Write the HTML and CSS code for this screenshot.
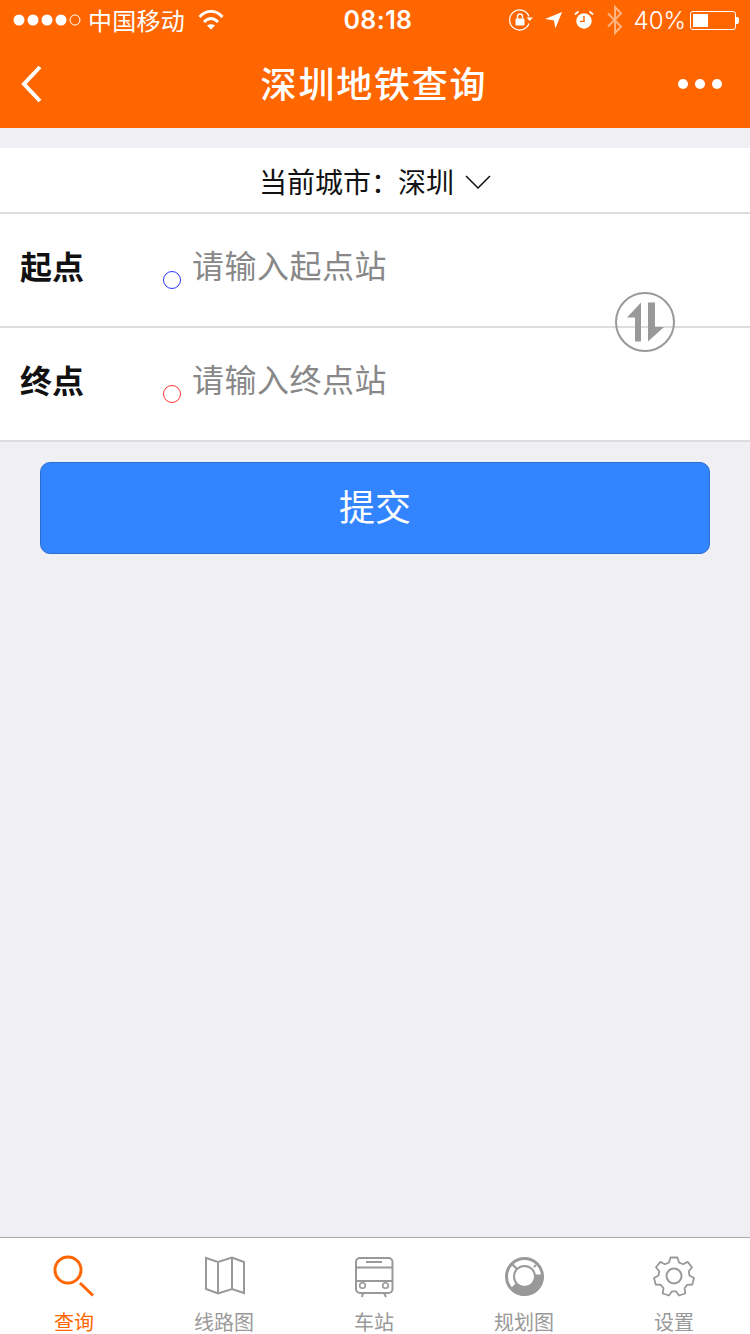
FILE: index.html
```html
<!DOCTYPE html>
<html lang="zh">
<head>
<meta charset="utf-8">
<title>深圳地铁查询</title>
<link rel="stylesheet" href="styles.css">
</head>
<body>
<div class="app">
  <header class="header">
    <div class="status">
      <div class="status-side">
        <svg class="signal" width="68" height="14" viewBox="0 0 68 14"><g fill="#fff"><circle cx="6" cy="7" r="5.500"/><circle cx="20" cy="7" r="5.500"/><circle cx="34" cy="7" r="5.500"/><circle cx="48" cy="7" r="5.500"/></g><circle cx="62" cy="7" r="5" fill="none" stroke="#fff" stroke-width="1"/></svg>
        <span class="carrier">中国移动</span>
        <svg class="wifi" width="26" height="20" viewBox="0 0 26 20"><g fill="none" stroke="#fff" stroke-width="2.800"><path d="M1.500 7C8 -0.500 18 -0.500 24.500 7"/><path d="M6 12C10.500 7.500 15.500 7.500 20 12"/></g><path d="M9 15.500C11.500 13.800 14.500 13.800 17 15.500L13 19.500Z" fill="#fff"/></svg>
      </div>
      <span class="time">08:18</span>
      <div class="status-side status-right">
        <svg width="24" height="22" viewBox="0 0 24 22"><path d="M20 14.500A10 10 0 1 1 20 7.500" fill="none" stroke="#fff" stroke-width="1.200"/><path d="M17.500 8.500H24L20.700 12Z" fill="#fff"/><rect x="6.500" y="9.500" width="9" height="7" rx="1" fill="#fff"/><path d="M8.500 9.500V7.500a2.500 2.500 0 0 1 5 0v2" fill="none" stroke="#fff" stroke-width="1.400"/></svg>
        <svg class="gap-arrow" width="18" height="18" viewBox="0 0 20 20"><path d="M0 9L19 1L11.500 19.500L10 10.500Z" fill="#fff"/></svg>
        <svg class="gap-alarm" width="20" height="20" viewBox="0 0 22 22"><circle cx="11" cy="12" r="8.500" fill="#fff"/><path d="M11 6.500V12.500H6.500" fill="none" stroke="#f60" stroke-width="1.600"/><path d="M1 5L5 1.500M21 5L17 1.500" stroke="#fff" stroke-width="2"/></svg>
        <svg class="gap-bt" width="16" height="30" viewBox="0 0 16 30"><path d="M1 8.500L14 21.500L8 28V2L14 8.500L1 21.500" fill="none" stroke="#fff" stroke-opacity=".5" stroke-width="2"/></svg>
        <span class="battery-text">40%</span>
        <span class="battery"><span class="battery-level" style="width:38%"></span></span>
        <span class="battery-tip"></span>
      </div>
    </div>
    <nav class="nav">
      <svg class="nav-back" width="24" height="38" viewBox="0 0 24 38"><path d="M20 2L4 19L20 36" fill="none" stroke="#fff" stroke-width="4"/></svg>
      <h1 class="nav-title">深圳地铁查询</h1>
      <div class="nav-more"><i></i><i></i><i></i></div>
    </nav>
  </header>

  <main class="main">
    <div class="city">
      <span class="city-label">当前城市：</span><span class="city-name">深圳</span>
      <svg class="city-arrow" width="26" height="16" viewBox="0 0 26 16"><path d="M1 2L13 14L25 2" fill="none" stroke="#111" stroke-width="1.500"/></svg>
    </div>
    <div class="form">
      <div class="row">
        <span class="row-label">起点</span>
        <span class="dot dot-start"></span>
        <span class="placeholder">请输入起点站</span>
      </div>
      <div class="row">
        <span class="row-label">终点</span>
        <span class="dot dot-end"></span>
        <span class="placeholder">请输入终点站</span>
      </div>
      <svg class="swap" width="60" height="60" viewBox="0 0 60 60"><circle cx="30" cy="30" r="29" fill="none" stroke="#999" stroke-width="2"/><path d="M26 10.500V49.500H20V25.500H12Z" fill="#999"/><path d="M33 10.500H40V35H49L33 49.500Z" fill="#999"/></svg>
    </div>
    <button class="submit" type="button">提交</button>
  </main>

  <footer class="tabs">
    <div class="tab tab-active">
      <svg width="44" height="44" viewBox="0 0 44 44"><circle cx="15" cy="15" r="13" fill="none" stroke="#f60" stroke-width="3"/><path d="M27 28L40 40.500" stroke="#f60" stroke-width="3"/></svg>
      <span>查询</span>
    </div>
    <div class="tab">
      <svg width="44" height="44" viewBox="0 0 44 44"><path d="M3 3L15 7L29 2.500L41 7V38L29 34L15 38.500L3 34Z M15 7V38.500 M29 2.500V34" fill="none" stroke="#999" stroke-width="2"/></svg>
      <span>线路图</span>
    </div>
    <div class="tab">
      <svg width="44" height="44" viewBox="0 0 44 44"><rect x="3" y="3" width="36.500" height="35" rx="4" fill="none" stroke="#999" stroke-width="2"/><path d="M3 12.500H39.500M3 26H39.500M13 7H29M10 38L9 42M31 38L33 42" fill="none" stroke="#999" stroke-width="2"/><circle cx="9.500" cy="30.500" r="2.800" fill="none" stroke="#999" stroke-width="1.600"/><circle cx="32.500" cy="30.500" r="2.800" fill="none" stroke="#999" stroke-width="1.600"/></svg>
      <span>车站</span>
    </div>
    <div class="tab">
      <svg width="44" height="44" viewBox="0 0 44 44"><circle cx="21.500" cy="21.500" r="18" fill="none" stroke="#999" stroke-width="3"/><path d="M21.500 19.500H40.500A19 19 0 0 1 7 34Z" fill="#999"/><circle cx="21.500" cy="21.500" r="10.500" fill="#fff" stroke="#999" stroke-width="2"/><path d="M9 9L14 14M33 10L31 12" stroke="#999" stroke-width="2"/></svg>
      <span>规划图</span>
    </div>
    <div class="tab">
      <svg width="44" height="44" viewBox="1 0 44 44"><circle cx="22" cy="21" r="7.500" fill="none" stroke="#999" stroke-width="2"/><path d="M18.500 2.500H25.500L27 7.500L31 9.300L35.700 6.900L40 12.300L36.800 16.300L37.500 20.500L42 23L40.300 29.500L35.200 29.900L32.500 33.300L33.300 38.500L27 40.500L24 36.300H20L17 40.500L10.700 38.500L11.500 33.300L8.800 29.900L3.700 29.500L2 23L6.500 20.500L7.200 16.300L4 12.300L8.300 6.900L13 9.300L17 7.500Z" fill="none" stroke="#999" stroke-width="1.800" stroke-linejoin="round"/></svg>
      <span>设置</span>
    </div>
  </footer>
</div>
</body>
</html>
```
FILE: styles.css
```css
* { box-sizing: border-box; }
html, body { margin: 0; padding: 0; }
body {
  font-family: "Noto Sans CJK SC", "Liberation Sans", sans-serif;
  background: #efeff4;
}
.app {
  width: 750px;
  height: 1334px;
  display: flex;
  flex-direction: column;
  overflow: hidden;
}
.header { background: #f60; color: #fff; height: 128px; flex: none; }
.status {
  height: 40px;
  padding: 0 13px;
  display: flex;
  align-items: center;
  justify-content: space-between;
  position: relative;
}
.status-side { display: flex; align-items: center; }
.carrier { font-size: 24px; letter-spacing: .25px; margin-left: 7px; line-height: 40px; }
.wifi { margin-left: 13px; }
.time {
  position: absolute;
  left: 6px;
  right: 0;
  text-align: center;
  font-family: Inter, "Liberation Sans", sans-serif;
  font-size: 25px;
  font-weight: 600;
  letter-spacing: .4px;
  pointer-events: none;
}
.status-right { margin-right: -2px; }
.gap-arrow { margin-left: 12px; }
.gap-alarm { margin-left: 11px; }
.gap-bt { margin-left: 13px; }
.battery-text {
  font-family: Inter, "Liberation Sans", sans-serif;
  font-size: 24px;
  font-weight: 300;
  margin-left: 11px;
}
.battery {
  margin-left: 4px;
  width: 46px;
  height: 19px;
  border: 1px solid #fff;
  border-radius: 3px;
  padding: 2px;
  display: flex;
}
.battery-level { display: block; background: #fff; height: 100%; }
.battery-tip { width: 3px; height: 7px; background: #fff; border-radius: 0 2px 2px 0; }
.nav {
  height: 88px;
  display: flex;
  align-items: center;
  justify-content: space-between;
  position: relative;
  padding: 0 28px 0 20px;
}
.nav-back { margin-top: -1px; }
.nav-title {
  position: absolute;
  left: -2px;
  right: 0;
  top: -2px;
  margin: 0;
  text-align: center;
  font-size: 36px;
  font-weight: 500;
  letter-spacing: 1.800px;
  line-height: 88px;
}
.nav-more { display: flex; gap: 7px; }
.nav-more i { display: block; width: 10px; height: 10px; border-radius: 50%; background: #fff; }
.main { flex: 1; padding-top: 20px; }
.city {
  height: 66px;
  background: #fff;
  border-bottom: 2px solid #ddd;
  display: flex;
  align-items: center;
  justify-content: center;
  font-size: 28px;
  color: #111;
}
.city-label { margin-right: -1px; padding-top: 2px; }
.city-name { padding-top: 2px; }
.city-arrow { margin-left: 11px; margin-top: 3px; }
.form { position: relative; background: #fff; }
.row {
  height: 114px;
  border-bottom: 2px solid #ddd;
  display: flex;
  align-items: center;
  padding: 0 20px;
}
.row-label {
  width: 143px;
  font-size: 32px;
  font-weight: 700;
  color: #111;
  margin-top: -11px;
}
.dot {
  width: 18px;
  height: 18px;
  border-radius: 50%;
  border: 1px solid;
  margin-top: 19px;
}
.dot-start { border-color: #33f; }
.dot-end { border-color: #f33; }
.placeholder {
  font-size: 32px;
  letter-spacing: .5px;
  color: #888;
  margin-left: 11px;
  margin-top: -13px;
}
.swap { position: absolute; left: 615px; top: 78px; }
.submit {
  display: block;
  width: 670px;
  height: 92px;
  margin: 20px auto 0;
  background: #3385ff;
  border: 1px solid #2a6fd0;
  border-radius: 10px;
  color: #fff;
  font-family: inherit;
  font-size: 36px;
  padding: 0 0 6px;
}
.tabs {
  height: 97px;
  flex: none;
  background: #fff;
  border-top: 1px solid #aaa;
  display: flex;
}
.tab {
  flex: 1;
  display: flex;
  flex-direction: column;
  align-items: center;
  padding-top: 17px;
  color: #999;
  font-size: 20px;
  line-height: 24px;
}
.tab span { margin-top: 11px; margin-left: -2px; }
.tab svg { flex: none; display: block; }
.tab-active { color: #f60; }
```
